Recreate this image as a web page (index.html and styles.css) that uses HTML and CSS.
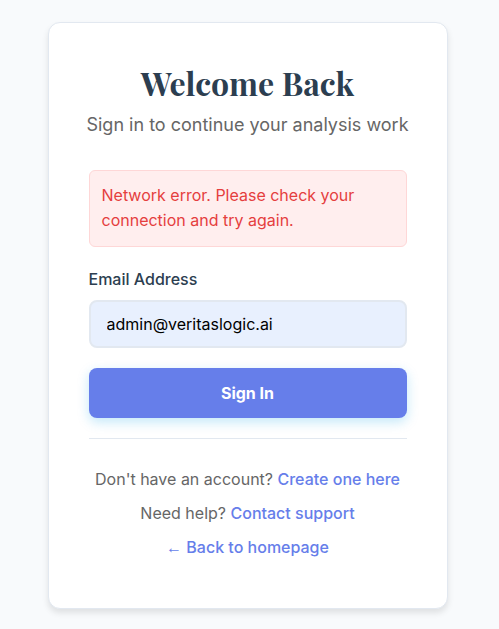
FILE: index.html
```html
<!DOCTYPE html>
<html lang="en">
<head>
<meta charset="utf-8">
<meta name="viewport" content="width=device-width, initial-scale=1">
<title>Sign In</title>
<link rel="stylesheet" href="styles.css">
</head>
<body>
<main class="card">
  <header class="header">
    <h1 class="title">Welcome Back</h1>
    <p class="subtitle">Sign in to continue your analysis work</p>
  </header>
  <div class="alert" role="alert">Network error. Please check your connection and try again.</div>
  <form class="form">
    <label class="label" for="email">Email Address</label>
    <input class="input" id="email" type="email" value="admin@veritaslogic.ai">
    <button class="button" type="submit">Sign In</button>
  </form>
  <footer class="links">
    <p>Don't have an account? <a href="#">Create one here</a></p>
    <p>Need help? <a href="#">Contact support</a></p>
    <p><a href="#"><span class="arrow">←</span> Back to homepage</a></p>
  </footer>
</main>
</body>
</html>
```
FILE: styles.css
```css
* {
  box-sizing: border-box;
  margin: 0;
}

body {
  min-height: 100vh;
  display: flex;
  align-items: center;
  justify-content: center;
  padding: 22px 24px 20px 20px;
  background: #f8fafc;
  color: #666;
  font: 16px/26px Inter, "Liberation Sans", sans-serif;
}

.card {
  width: 100%;
  max-width: 400px;
  padding: 40px;
  background: #fff;
  border: 1px solid #e2e8f0;
  border-radius: 12px;
  box-shadow: 0 4px 6px rgba(0, 0, 0, 0.1);
}

.header {
  margin: 0 -8px 31px;
  text-align: center;
}

.title {
  margin-bottom: 8px;
  color: #2c3e50;
  font: 700 32px/40px "Playfair Display", "Liberation Serif", serif;
}

.subtitle {
  font-size: 18px;
  line-height: 28px;
}

.alert {
  margin-bottom: 20px;
  padding: 12px 12px 13px;
  background: #fee;
  border: 1px solid #fed7d7;
  border-radius: 6px;
  color: #e53e3e;
  line-height: 25px;
}

.form {
  display: flex;
  flex-direction: column;
}

.label {
  margin-bottom: 8px;
  color: #2c3e50;
  font-weight: 500;
  line-height: 25px;
}

.input {
  width: 100%;
  height: 48px;
  margin-bottom: 20px;
  padding: 0 16px;
  background: #e8f0fe;
  border: 2px solid #e2e8f0;
  border-radius: 8px;
  color: #000;
  font: inherit;
}

.button {
  height: 50px;
  background: #667eea;
  border: 0;
  border-radius: 8px;
  box-shadow: 0 4px 12px rgba(14, 165, 233, 0.25);
  color: #fff;
  font: 700 16px/24px Inter, sans-serif;
}

.links {
  display: flex;
  flex-direction: column;
  gap: 8px;
  margin-top: 20px;
  padding: 27px 0 8px;
  border-top: 1px solid #e2e8f0;
  text-align: center;
}

.links a {
  color: #667eea;
  font-weight: 500;
  text-decoration: none;
}

.arrow {
  font: 400 16px/1 "Liberation Sans", sans-serif;
}
```
